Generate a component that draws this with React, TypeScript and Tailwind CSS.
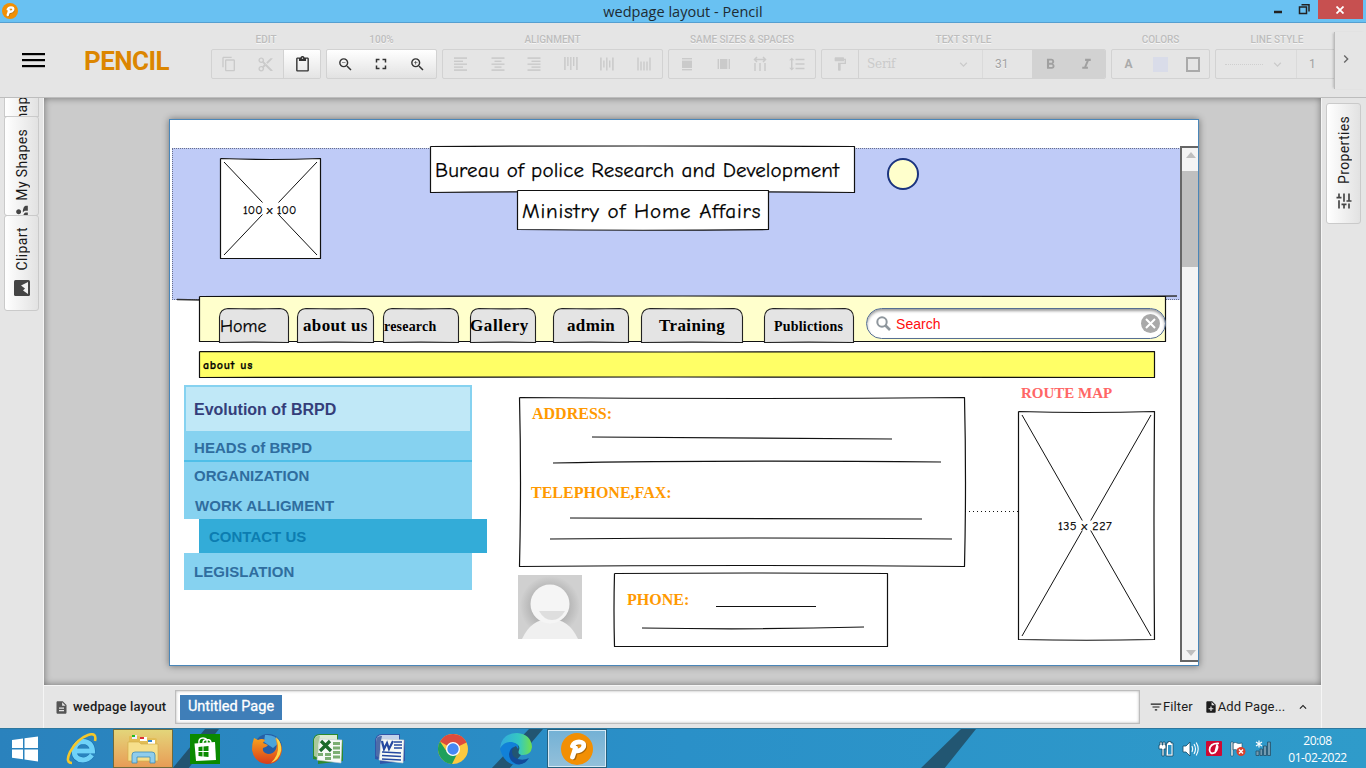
import React from "react";
import {
  MdContentCopy, MdContentCut, MdContentPaste, MdZoomOut, MdZoomIn, MdFullscreen, MdFormatPaint,
  MdFormatLineSpacing, MdExpandMore, MdExpandLess, MdChevronRight, MdTune, MdFilterList, MdDescription, MdNoteAdd,
  MdPeople, MdFormatItalic, MdFormatBold,
} from "react-icons/md";

const comic = "font-['Comic_Sans_MS','Comic_Neue','Open_Sans',sans-serif] [-webkit-text-stroke:0.25px_black]";
const serif = "font-['Liberation_Serif',serif]";
const arial = "font-['Liberation_Sans',sans-serif]";
const emboss = "[text-shadow:0_1px_0_#f6f6f6]";

/* ---------- toolbar ---------- */

function Group({ label, children, className = "", tone = "text-[#cacaca]" }: { label: string; children: React.ReactNode; className?: string; tone?: string }) {
  return (
    <div className="flex shrink-0 flex-col">
      <div className={"flex h-[15px] justify-center text-[10px] font-medium leading-[15px] text-[#bdbdbd] " + emboss}>
        <span className="whitespace-nowrap">{label}</span>
      </div>
      <div className={"mt-[2px] flex h-[30px] overflow-hidden rounded-[2px] border border-[#d2d2d2] " + tone + " " + className}>
        {children}
      </div>
    </div>
  );
}

function Cell({ children, className = "" }: { children: React.ReactNode; className?: string }) {
  return <div className={"flex min-w-0 flex-1 items-center justify-center " + className}>{children}</div>;
}

function Rects({ r, flip = false }: { r: number[][]; flip?: boolean }) {
  return (
    <svg width="16" height="16" viewBox="0 0 16 16" fill="currentColor" className={flip ? "rotate-90" : ""}>
      {r.map((v, i) => (
        <rect key={i} x={v[0]} y={v[1]} width={v[2]} height={v[3]} />
      ))}
    </svg>
  );
}

const left = [[1, 1.3, 13, 1.6], [1, 4.6, 9, 1.4], [1, 7.5, 13, 1.4], [1, 10.4, 9, 1.4], [1, 13.3, 13, 1.6]];
const center = [[1.5, 1.3, 13, 1.6], [4.5, 4.6, 7, 1.4], [1.5, 7.5, 13, 1.4], [4.5, 10.4, 7, 1.4], [1.5, 13.3, 13, 1.6]];
const right = [[1.5, 1.3, 13, 1.6], [5.5, 4.6, 9, 1.4], [1.5, 7.5, 13, 1.4], [5.5, 10.4, 9, 1.4], [1.5, 13.3, 13, 1.6]];
const same = [[3, 2, 10, 1.4], [3, 4.6, 10, 7.4], [3, 13, 10, 1.4]];

function Toolbar() {
  return (
    <header className="flex h-[75px] border-b border-[#bdbdbd] bg-[#e5e5e5]">
      <div className="flex w-[211px] shrink-0 items-center">
        <svg width="23" height="17" className="ml-[22px]" fill="#000">
          <rect y="1" width="23" height="2.2" /><rect y="7" width="23" height="2.2" /><rect y="13" width="23" height="2.2" />
        </svg>
        <span className="ml-[39px] pt-px text-[26px] font-bold leading-none tracking-[-0.55px] text-[#dc8600]">PENCIL</span>
      </div>
      <div className="flex w-[1123px] gap-[5px] overflow-hidden pt-[9px]">
        <Group label="EDIT" className="w-[110px]">
          <Cell><MdContentCopy size={16} className="-ml-[2px]" /></Cell>
          <Cell><MdContentCut size={17} /></Cell>
          <Cell className="border-l border-[#d2d2d2] bg-gradient-to-b from-white to-[#e4e4e4] text-[#333]"><MdContentPaste size={17} /></Cell>
        </Group>
        <Group label="100%" tone="text-[#333]" className="w-[111px] bg-gradient-to-b from-white to-[#e2e2e2]">
          <Cell><MdZoomOut size={17} /></Cell>
          <Cell><MdFullscreen size={18} /></Cell>
          <Cell><MdZoomIn size={17} /></Cell>
        </Group>
        <Group label="ALIGNMENT" className="w-[221px]">
          <Cell><Rects r={left} /></Cell><Cell><Rects r={center} /></Cell><Cell><Rects r={right} /></Cell>
          <Cell><Rects r={left} flip /></Cell><Cell><Rects r={center} flip /></Cell>
          <Cell><Rects r={[[1.3, 1.5, 1.4, 13], [4.3, 5.5, 1.4, 9], [7.3, 5.5, 1.4, 9], [10.3, 5.5, 1.4, 9], [13.3, 1.5, 1.4, 13]]} /></Cell>
        </Group>
        <Group label="SAME SIZES & SPACES" className="w-[148px]">
          <Cell><Rects r={same} /></Cell>
          <Cell><Rects r={same} flip /></Cell>
          <Cell>
            <svg width="16" height="16" fill="none" stroke="currentColor" strokeWidth="1.5">
              <path d="M3 3.500h10M5 1 2.500 3.500 5 6M11 1l2.500 2.500L11 6M3 7v8M8 7v8M13 7v8" />
            </svg>
          </Cell>
          <Cell><MdFormatLineSpacing size={18} /></Cell>
        </Group>
        <Group label="TEXT STYLE" className="w-[285px]">
          <div className="flex w-[37px] items-center justify-center border-r border-[#d2d2d2]"><MdFormatPaint size={16} /></div>
          <div className="flex w-[124px] items-center justify-between border-r border-[#dadada] pl-[8px] pr-[11px]">
            <span className="font-['DejaVu_Serif',serif] text-[12px] tracking-[-0.2px]">Serif</span>
            <MdExpandMore size={15} />
          </div>
          <div className={"flex w-[49px] items-center pl-[12px] text-[12px] text-[#a3a3a3] " + emboss}>31</div>
          <div className="flex flex-1 bg-[#d2d2d2] text-[#a0a0a0]">
            <Cell><MdFormatBold size={17} /></Cell><Cell><MdFormatItalic size={17} /></Cell>
          </div>
        </Group>
        <Group label="COLORS" className="w-[99px] items-center">
          <span className="w-[33px] text-center text-[12px] font-bold text-[#aaa]">A</span>
          <span className="ml-[8px] h-[15px] w-[15px] bg-[#d9dce9]" />
          <span className="ml-[18px] h-[15px] w-[14px] border-2 border-[#aaa]" />
        </Group>
        <Group label="LINE STYLE" className="w-[124px]">
          <div className="flex w-[81px] items-center justify-between border-r border-[#dadada] pl-[9px] pr-[11px]">
            <span className="w-[38px] border-t border-dotted border-[#cfcfcf]" />
            <MdExpandMore size={15} />
          </div>
          <div className="flex flex-1 items-center pl-[12px] text-[12px] text-[#a3a3a3]">1</div>
        </Group>
      </div>
      <div className="mt-[9px] flex h-[57px] flex-1 items-center justify-center border-l border-[#bcbcbc] bg-[#e5e5e5] shadow-[-2px_0_2px_-1px_rgba(0,0,0,.18)]">
        <MdChevronRight size={16} className="-mt-[3px] mr-[9px] text-[#666]" />
      </div>
    </header>
  );
}

/* ---------- sketch canvas ---------- */

function Sketch({ w, h, fill = "#fff", t = 0, r = 0, b = 0, l = 0, cross = false, gap = 10, children }: {
  w: number; h: number; fill?: string; t?: number; r?: number; b?: number; l?: number; cross?: boolean; gap?: number; children?: React.ReactNode;
}) {
  const cx = w / 2, cy = h / 2, k = cx / cy;
  return (
    <svg className="absolute left-0 top-0 overflow-visible" width={w} height={h} fill="none" stroke="#111" strokeWidth="1.2">
      <path fill={fill} strokeLinejoin="round" d={`M.5 .5Q${cx} ${0.5 + t} ${w - 0.5} .5Q${w - 0.5 + r} ${cy} ${w - 0.5} ${h - 0.5}Q${cx} ${h - 0.5 + b} .5 ${h - 0.5}Q${0.5 + l} ${cy} .5 .5`} />
      {cross && (
        <path strokeWidth="1" d={`M4 4L${cx - gap * k} ${cy - gap + 2}M${w - 4} 4L${cx + gap * k} ${cy - gap + 2}M4 ${h - 4}L${cx - gap * k} ${cy + gap - 2}M${w - 4} ${h - 4}L${cx + gap * k} ${cy + gap - 2}`} />
      )}
      {children}
    </svg>
  );
}

function Tab({ w, box, text, children }: { w: number; box: string; text: string; children: React.ReactNode }) {
  return (
    <div className={"absolute top-[188px] h-[35px] " + box}>
      <svg className="absolute inset-0 overflow-visible" width={w} height="35">
        <path d={`M.5 34.500V9Q1 1 9 .5Q${w / 2} 1.300 ${w - 9} .5Q${w - 1} 1 ${w - 0.5} 9V34.500Q${w / 2} 33.800 .5 34.500Z`} fill="#e4e4e4" stroke="#222" strokeWidth="1.100" />
      </svg>
      <span className={"absolute top-0 whitespace-nowrap leading-[35px] text-black " + text}>{children}</span>
    </div>
  );
}

const b17 = serif + " text-[17px] font-bold ";
const menuText = "flex items-center pl-[10px] text-[15px] font-bold text-[#2f6d9f] tracking-[0.05px] ";
const orange = "absolute whitespace-nowrap font-bold leading-none text-[#ff9900] text-[16px] " + serif + " ";

function Canvas() {
  return (
    <div className="relative h-[547px] w-[1030px] overflow-hidden border border-[#4a86b8] bg-white">
      <div className="absolute left-[2px] top-[28px] h-[152px] w-[1009px] border border-dotted border-[#6a708a] bg-[#bfcbf7]" />
      <svg className="absolute left-0 top-[170px]" width="1010" height="14" stroke="#333" strokeWidth="1.3" fill="none">
        <path d="M7 9.500L30 10M900 7L1007 6" />
      </svg>

      <div className="absolute left-[50px] top-[38px] h-[102px] w-[101px]">
        <Sketch w={101} h={101} t={2} cross gap={8} />
        <span className={"absolute left-[23px] top-[44px] whitespace-nowrap text-[12px] leading-[16px] tracking-[0.1px] " + comic}>100 x 100</span>
      </div>
      <div className="absolute left-[260px] top-[26px] h-[47px] w-[425px]">
        <Sketch w={425} h={47} t={-1} b={-2} />
        <span className={"absolute left-[5px] top-[10px] whitespace-nowrap text-[21px] leading-[28px] tracking-[0.14px] " + comic}>Bureau of police Research and Development</span>
      </div>
      <div className="absolute left-[347px] top-[70px] h-[40px] w-[252px]">
        <Sketch w={252} h={40} b={1.5} />
        <span className={"absolute left-[5px] top-[7px] whitespace-nowrap text-[21px] leading-[28px] tracking-[0.82px] " + comic}>Ministry of Home Affairs</span>
      </div>
      <div className="absolute left-[717px] top-[38px] h-[32px] w-[32px] rounded-full border-2 border-[#1b347f] bg-[#ffffcc]" />

      <div className="absolute left-[29px] top-[176px] h-[47px] w-[967px]"><Sketch w={967} h={46} fill="#ffffcc" t={-1} /></div>
      <Tab w={70} box="left-[49px] w-[70px]" text={"left-[1px] pt-[1px] text-[18px] " + comic}>Home</Tab>
      <Tab w={77} box="left-[127px] w-[77px]" text={"left-[6px] tracking-[0.35px] " + b17}>about us</Tab>
      <Tab w={76} box="left-[213px] w-[76px]" text={"left-[1px] pt-[1px] text-[14px] font-bold tracking-[0.2px] " + serif}>research</Tab>
      <Tab w={66} box="left-[300px] w-[66px]" text={"left-0 tracking-[0.6px] " + b17}>Gallery</Tab>
      <Tab w={76} box="left-[383px] w-[76px]" text={"left-[14px] tracking-[0.35px] " + b17}>admin</Tab>
      <Tab w={102} box="left-[471px] w-[102px]" text={"left-[18px] tracking-[0.4px] " + b17}>Training</Tab>
      <Tab w={90} box="left-[594px] w-[90px]" text={"left-[10px] pt-[1px] text-[14px] font-bold tracking-[0.2px] " + serif}>Publictions</Tab>

      <div className={"absolute left-[696px] top-[188px] flex h-[31px] w-[300px] items-center rounded-full border border-[#566f92] bg-white pl-[9px] pr-[5px] shadow-[inset_0_2px_3px_rgba(0,0,0,.4)] " + arial}>
        <svg width="16" height="16" fill="none" stroke="#8e969d"><circle cx="6" cy="6" r="4.700" strokeWidth="2" /><path d="M9.500 9.500L14 14" strokeWidth="2.600" /></svg>
        <span className="ml-[4px] pt-[2px] text-[14px] tracking-[0.05px] text-[#ff0d0d]">Search</span>
        <span className="ml-auto flex h-[19px] w-[19px] items-center justify-center rounded-full bg-[#a9a9a9] text-white">
          <svg width="11" height="11" stroke="#fff" strokeWidth="2"><path d="M1 1L10 10M10 1L1 10" /></svg>
        </span>
      </div>

      <div className="absolute left-[29px] top-[231px] h-[27px] w-[956px]">
        <Sketch w={956} h={27} fill="#ffff66" t={1} b={-1} />
        <span className={"absolute left-[4px] top-[6px] whitespace-nowrap text-[12px] font-bold leading-[16px] tracking-[0.7px] " + comic}>about us</span>
      </div>

      <div className={"absolute left-[14px] top-[265px] flex w-[303px] flex-col " + arial}>
        <div className="flex h-[48px] w-[288px] items-center border-2 border-[#86d2f0] bg-[#c0e8f7] pl-[8px] pt-[2px] text-[16px] font-bold text-[#343e7a]">Evolution of BRPD</div>
        <div className={menuText + "h-[29px] w-[288px] border-b-2 border-[#4fbfe8] bg-[#86d2f0] pt-[3px]"}>HEADS of BRPD</div>
        <div className={menuText + "h-[29px] w-[288px] bg-[#86d2f0]"}>ORGANIZATION</div>
        <div className={menuText + "h-[28px] w-[288px] bg-[#86d2f0] pl-[11px] pt-[2px]"}>WORK ALLIGMENT</div>
        <div className="ml-[15px] flex h-[34px] w-[288px] items-center bg-[#33acd8] pl-[10px] pt-[2px] text-[15px] font-bold text-[#0c7db1]">CONTACT US</div>
        <div className={menuText + "h-[37px] w-[288px] bg-[#86d2f0] pt-[2px]"}>LEGISLATION</div>
      </div>

      <div className="absolute left-[349px] top-[277px] h-[170px] w-[446px]">
        <Sketch w={446} h={170} t={2} b={-2} l={2} r={2}>
          <path d="M73 40L373 42M34 66Q200 63 422 65M51 121Q200 122 403 122M31 142Q230 140 433 142" />
        </Sketch>
        <span className={orange + "left-[13px] top-[9px]"}>ADDRESS:</span>
        <span className={orange + "left-[12px] top-[88px]"}>TELEPHONE,FAX:</span>
      </div>
      <svg className="absolute left-[795px] top-[391px]" width="54" height="1" stroke="#111"><path d="M0 .5H54" strokeDasharray="1 3" /></svg>

      <svg className="absolute left-[348px] top-[455px]" width="64" height="64">
        <defs><radialGradient id="av"><stop offset=".6" stopColor="#b4b4b4" /><stop offset="1" stopColor="#d0d0d0" /></radialGradient></defs>
        <rect width="64" height="64" fill="#d0d0d0" /><circle cx="32" cy="31" r="30" fill="url(#av)" />
        <path d="M4 64Q13 44 32 44T60 64Z" fill="#f0f0f0" />
        <circle cx="32" cy="29" r="19.500" fill="#f5f5f5" /><path d="M21 36H47Q42 45 34 45T21 36Z" fill="#dedede" />
      </svg>

      <div className="absolute left-[444px] top-[453px] h-[74px] w-[274px]">
        <Sketch w={274} h={74} t={-1} l={-1}>
          <path d="M102 33.500H202M28 55Q140 57 250 54" />
        </Sketch>
        <span className={orange + "left-[13px] top-[19px]"}>PHONE:</span>
      </div>

      <span className={"absolute left-[851px] top-[265px] whitespace-nowrap text-[15px] font-bold leading-[16px] text-[#ff6666] " + serif}>ROUTE MAP</span>
      <div className="absolute left-[848px] top-[291px] h-[229px] w-[137px]">
        <Sketch w={137} h={229} t={2} b={1.5} r={-1} cross gap={7} />
        <span className={"absolute left-[40px] top-[107px] whitespace-nowrap text-[12px] leading-[16px] tracking-[0.55px] " + comic}>135 x 227</span>
      </div>

      <div className="absolute left-[1010px] top-[26px] flex h-[516px] w-[18px] flex-col items-center border-2 border-r-0 border-[#666] bg-[#f4f4f4]">
        <span className="mt-[4px] ml-[2px] border-x-[5px] border-b-[6px] border-x-transparent border-b-[#bfbfbf]" />
        <span className="mt-[13px] h-[96px] w-full bg-[#bfbfbf]" />
        <span className="mb-[4px] ml-[2px] mt-auto border-x-[5px] border-t-[6px] border-x-transparent border-t-[#bfbfbf]" />
      </div>
    </div>
  );
}

/* ---------- side panels and page bar ---------- */

function SideTab({ label, icon, className }: { label: string; icon: React.ReactNode; className: string }) {
  return (
    <div className={"flex w-[35px] shrink-0 flex-col items-center justify-end overflow-hidden rounded-[3px] border border-[#cacaca] bg-gradient-to-r from-white to-[#e2e2e2] text-[#1a1a1a] " + className}>
      <span className="rotate-180 whitespace-nowrap text-[14px] leading-[18px] tracking-[0.35px] [writing-mode:vertical-rl]">{label}</span>
      {icon}
    </div>
  );
}

function PageBar() {
  return (
    <div className="flex h-[43px] items-center border-t border-[#f5f5f5] bg-[#e5e5e5] text-[#1c1c1c]">
      <MdDescription size={15} className="ml-[10px] text-[#555]" />
      <span className="ml-[4px] w-[102px] whitespace-nowrap text-[13px] font-medium tracking-[0.15px]">wedpage layout</span>
      <div className="flex h-[34px] w-[965px] items-center border border-[#bdbdbd] bg-white pl-[4px] shadow-[inset_0_0_3px_rgba(0,0,0,.3)]">
        <span className="flex h-[25px] w-[102px] items-center justify-center whitespace-nowrap bg-[#3f7eb8] text-[14.5px] text-white [-webkit-text-stroke:0.3px_white]">Untitled Page</span>
      </div>
      <MdFilterList size={14} className="ml-[9px]" />
      <span className="text-[13px] tracking-[0.1px]">Filter</span>
      <MdNoteAdd size={14} className="ml-[11px]" />
      <span className="whitespace-nowrap text-[13px] tracking-[0.15px]">Add Page...</span>
      <MdExpandLess size={14} className="ml-[11px]" />
    </div>
  );
}

/* ---------- taskbar ---------- */

function PencilLogo({ size }: { size: number }) {
  return (
    <svg width={size} height={size} viewBox="0 0 32 32">
      <circle cx="16" cy="16" r="16" fill="#f28f04" />
      <path d="M12 24L14.500 15M11.500 13Q13 9 18 8.800Q24 9 22.500 14Q20.500 18 15 18" transform="translate(1 1)" fill="none" stroke="#7a4b0a" strokeOpacity=".6" strokeWidth="4.500" strokeLinecap="round" />
      <path d="M11.500 24L14.500 15M11.500 13Q13 9 18 8.800Q24 9 22.500 14Q20.500 18 15 18" fill="none" stroke="#fff" strokeWidth="4.800" strokeLinecap="round" />
    </svg>
  );
}

function Office({ main, word }: { main: string; word?: boolean }) {
  return (
    <svg width="32" height="32" viewBox="0 0 32 32">
      <path d="M8 1H26V7H31V28L6 31V27L1 26V9Q1 1 8 1Z" fill={main} />
      <path d="M8 2H25V20H2V9Q2 2 8 2Z" fill={word ? "#c4d1ea" : "#dcebd4"} />
      <path d="M2 23V9Q2 2 8 3L6 12V25Z" fill={word ? "#4e6ca8" : "#a9c89a"} />
      <path d="M8 6L30 7L29 30L5 27Z" fill="#f7faf7" stroke="#c5ccd2" strokeWidth=".6" />
      {word ? (
        <>
          <path d="M8 8L10 16L13 10L15 16L19 8" fill="none" stroke="#2549a0" strokeWidth="2.200" />
          <path d="M20 9H28M20 12H28M20 15H28M8 19L27 20M8 22.500L27 23.500M8 26L27 27" stroke="#2549a0" strokeWidth="1.500" />
        </>
      ) : (
        <>
          <path d="M21 9h7v3h-7zM21 13.500h7v3h-7zM21 18h7v3h-7zM21 22.500h7v3h-7zM13 20h6v3h-6zM13 24h6v3h-6zM6 20h5v3H6z" fill="#7cae73" />
          <path d="M9 8L19 18M18 8L8 18" stroke="#1d6a2b" strokeWidth="3.200" />
        </>
      )}
    </svg>
  );
}

function Slot({ children, className = "w-[62px]" }: { children: React.ReactNode; className?: string }) {
  return <div className={"flex h-full shrink-0 items-center justify-center " + className}>{children}</div>;
}

function Taskbar() {
  return (
    <footer className="relative flex h-[40px] items-center overflow-hidden border-t border-[#2d789f] bg-gradient-to-r from-[#2a82bd] via-[#2a90c8] to-[#2f9bca]">
      <svg className="absolute inset-0" width="1366" height="40" fill="#214b63" fillOpacity=".85">
        <path d="M205 0H219L188 40H172ZM529 0H543L509 40H491ZM961 0H976L944 40H920Z" />
      </svg>
      <div className="relative flex h-full w-full items-center">
        <Slot className="w-[50px]">
          <svg width="28" height="26" fill="#fff"><path d="M1 4L12 2.500V12H1ZM13.500 2.300L27 .5V12H13.500ZM1 13.500H12V23.200L1 21.700ZM13.500 13.500H27V25.500L13.500 23.500Z" /></svg>
        </Slot>
        <Slot className="w-[63px]">
          <svg width="32" height="32" viewBox="0 0 32 32">
            <path d="M26 22Q22 27 17 27Q8.500 26.500 8 18Q9 9 17 8.500Q26 9 26.500 18H10" fill="none" stroke="#176fae" strokeWidth="6" />
            <path d="M26 22Q22 27 17 27Q8.500 26.500 8 18Q9 9 17 8.500Q26 9 26.500 18H10" fill="none" stroke="#6fd2f8" strokeWidth="5" />
            <path d="M6 30Q-1 30 4 19Q11 6 22 2Q31-1 29 8" fill="none" stroke="#f5c72c" strokeWidth="2.600" />
          </svg>
        </Slot>
        <Slot className="w-[60px] border border-[#6f6a3c] bg-gradient-to-b from-[#e3d57a] to-[#e79c56]">
          <svg width="34" height="30" viewBox="0 0 34 30">
            <path d="M3 3Q3 2 4 2H13L15 4H29Q31 4 31 6V27H3Z" fill="#e2bd56" />
            <path d="M6 1h5v4H6z" fill="#eef" /><path d="M6 1h3v2H6z" fill="#2b2" /><path d="M14 3h7v4h-7z" fill="#fff" /><path d="M14 3h4v2h-4z" fill="#d33" /><path d="M22 6h7v4h-7z" fill="#fff" /><path d="M22 6h4v2h-4z" fill="#38c" />
            <path d="M2 8H13L15 10H32V27H2Z" fill="#f6df8b" stroke="#d2ab45" strokeWidth=".6" />
            <path d="M6 29V21Q6 18 9 18H26Q29 18 29 21V29H24V23H11V29Z" fill="#8fcdec" stroke="#3d8ab8" strokeWidth=".8" />
          </svg>
        </Slot>
        <Slot className="w-[64px]">
          <svg width="30" height="30"><rect width="30" height="30" fill="#0a8a00" /><path d="M4.500 9.500L25 8L26 26L6 27Z" fill="#fff" /><path d="M9 10Q8 4 13 4T17 9M13 9Q13 5.500 17 5.500T21 9" fill="none" stroke="#fff" strokeWidth="1.400" /><path d="M8.500 13L12.500 12.500V17H8.500ZM13.500 12.400L18.500 12V17H13.500ZM8.500 18H12.500V22.500L8.500 22ZM13.500 18H18.500V23L13.500 22.600Z" fill="#0a8a00" /></svg>
        </Slot>
        <Slot className="w-[60px]">
          <svg width="32" height="32" viewBox="0 0 32 32">
            <defs><linearGradient id="fx" x2="0" y2="1"><stop stopColor="#f7a41d" /><stop offset="1" stopColor="#d93b1a" /></linearGradient></defs>
            <circle cx="17" cy="15" r="14" fill="#255ea6" /><path d="M14 2Q24 1 29 9L22 15L13 9Z" fill="#4aa5dc" />
            <path d="M3 5L7 7Q11 5 14 7L12 10L17 12Q16 14 12 15Q11 20 17 21Q23 21 25 16Q27 10 24 5Q31 9 31 17Q29 31 16 31Q3 30 1 17Q1 10 3 5Z" fill="url(#fx)" />
            <path d="M25 4Q31 9 30 18Q28 27 20 30Q28 22 27 12Z" fill="#ffd447" />
          </svg>
        </Slot>
        <Slot><Office main="#2d8a2e" /></Slot>
        <Slot><Office main="#3156a8" word /></Slot>
        <Slot className="w-[63px]">
          <svg width="30" height="30" viewBox="0 0 30 30">
            <circle cx="15" cy="15" r="15" fill="#fbc940" /><path d="M15 15L28.500 8.500A15 15 0 0 0 2 7.500Z" fill="#dd4b3e" /><path d="M2 7.500A15 15 0 0 0 14 30L20 18L9 18Z" fill="#1fa05c" /><path d="M15 8H28.300L25 5L15 4Z" fill="#dd4b3e" />
            <circle cx="15" cy="15" r="7" fill="#fff" /><circle cx="15" cy="15" r="5.700" fill="#4688f4" />
          </svg>
        </Slot>
        <Slot className="w-[63px]">
          <svg width="32" height="32" viewBox="0 0 32 32">
            <defs><linearGradient id="e1"><stop stopColor="#31a9df" /><stop offset=".6" stopColor="#35c9c0" /><stop offset="1" stopColor="#72e04b" /></linearGradient></defs>
            <path d="M0 15Q2 0 17 0Q31 1 32 14Q31 22 23 22Q17 22 19 17Q21 11 12 10Q4 9 0 15Z" fill="url(#e1)" />
            <path d="M0 16Q4 8 12 9Q20 11 18 16L16 13Q9 16 11 24Q14 31 20 31.500Q5 34 0 16Z" fill="#1181d8" />
            <path d="M14 14Q10 19 14 24Q21 29 29 25Q24 33 16 31Q9 28 9 21Q10 15 14 14Z" fill="#124c9b" />
          </svg>
        </Slot>
        <Slot className="w-[60px] border border-[#24607f] bg-gradient-to-b from-[#73b1d5] to-[#93c0da] shadow-[inset_0_0_0_1px_#d7eaf5]"><PencilLogo size={32} /></Slot>
        <div className="ml-auto flex items-center text-white">
          <svg width="116" height="20" viewBox="0 0 116 20" className="mr-[14px]">
            <g stroke="#174a64" strokeWidth=".8">
              <path d="M2 3h2v3h1V3h2v3h1v4H6v7H4v-7H1V6h1z" fill="#fff" />
              <path d="M8.500 4h1.500V2.500h3V4h2v13h-7z" fill="#fff" /><path d="M10 6h3.500v9.500H10z" fill="#2c93c6" stroke="none" />
              <path d="M25 7h3l4-4v14l-4-4h-3z" fill="#fff" />
            </g>
            <path d="M34 7q1.500 3 0 6M36 5q3 5 0 10M38.200 3.500q4 6.500 0 13" fill="none" stroke="#fff" strokeWidth="1.100" />
            <rect x="48" y="2" width="16" height="15" rx="1" fill="#cf0a33" /><path d="M61 4.500Q52 4 51.500 11Q52 16 57 13.500Q61 9 59 6L57 14" fill="none" stroke="#fff" strokeWidth="1.700" />
            <path d="M73 3h2v14h-2zM75 4q3-1 4 0t5 0v7q-3 1-5 0t-4 0z" fill="#fff" stroke="#174a64" strokeWidth=".6" />
            <circle cx="83" cy="12.500" r="4.500" fill="#d9412c" /><path d="M81 10.500l4 4M85 10.500l-4 4" stroke="#fff" strokeWidth="1.400" />
            <g fill="#729bb0" stroke="#235069" strokeWidth=".8"><path d="M98 12h3v4.500h-3zM102 10h2.500v6.500H102zM105.500 7h3v9.500h-3zM109.500 3h3v13.500h-3z" /></g>
            <path d="M101 1.500v7M98 3l6 4M104 3l-6 4" stroke="#fff" strokeWidth="1.200" />
          </svg>
          <div className="mr-[19px] flex w-[59px] flex-col items-center whitespace-nowrap font-['Open_Sans',sans-serif] text-[12px] leading-[17px] tracking-[-0.4px]">
            <span>20:08</span><span>01-02-2022</span>
          </div>
        </div>
      </div>
    </footer>
  );
}

export default function App() {
  return (
    <div className="flex h-[768px] w-[1366px] flex-col overflow-hidden bg-[#e5e5e5] font-['Roboto',sans-serif]">
      <div className="flex h-[23px] shrink-0 justify-between border-b border-[#559fd0] bg-[#69c1f2]">
        <div className="flex w-[144px] items-center pl-[2px]"><PencilLogo size={16} /></div>
        <span className="whitespace-nowrap font-['Open_Sans',sans-serif] text-[14.5px] leading-[23px] tracking-[0.02px] text-[#1d2b33]">wedpage layout - Pencil</span>
        <div className="flex w-[144px] justify-end">
          <svg width="48" height="20" fill="none" stroke="#222" strokeWidth="1.500">
            <path d="M4 12H12" strokeWidth="2.500" /><path d="M29.500 7h7v6.500h-7zM31.500 4.700h7.500v6.800" />
          </svg>
          <div className="mr-[3px] flex h-[19px] w-[45px] items-center justify-center bg-[#c75050]">
            <svg width="8" height="8" stroke="#fff" strokeWidth="1.800"><path d="M.5 .5L7.500 7.500M7.500 .5L.5 7.500" /></svg>
          </div>
        </div>
      </div>
      <Toolbar />
      <main className="flex h-[630px]">
        <aside className="flex w-[44px] flex-col overflow-hidden border-r border-[#f5f5f5] bg-[#e5e5e5] pl-[4px]">
          <SideTab label="Shapes" className="h-[19px] rounded-none border-t-0 [&>span]:relative [&>span]:top-[13px]" icon={null} />
          <SideTab label="My Shapes" className="-mt-px h-[100px]" icon={<MdPeople size={20} className="-mb-[10px] mt-[4px] shrink-0 -rotate-90 text-[#444]" />} />
          <SideTab label="Clipart" className="-mt-px h-[96px] pb-[14px]" icon={
            <svg width="16" height="16" className="mt-[9px]"><rect width="16" height="16" rx="1.500" fill="#444" /><path d="M14 2v12L9 10.500 11 8.500 7 5.500Z" fill="#f0f0f0" /></svg>
          } />
        </aside>
        <section className="flex w-[1277px] flex-col">
          <div className="flex h-[587px] bg-[#cbcbcb] pl-[125px] pt-[21px] shadow-[inset_0_0_7px_rgba(0,0,0,.45)]">
            <div className="h-[547px] w-[1030px] shadow-[0_0_7px_rgba(0,0,0,.45)]"><Canvas /></div>
          </div>
          <PageBar />
        </section>
        <aside className="w-[45px] border-l border-[#f5f5f5] bg-[#e5e5e5] pl-[4px] pt-[5px]">
          <SideTab label="Properties" className="h-[121px] pb-[12px]" icon={<MdTune size={20} className="mt-[7px] -rotate-90 text-[#444]" />} />
        </aside>
      </main>
      <Taskbar />
    </div>
  );
}
